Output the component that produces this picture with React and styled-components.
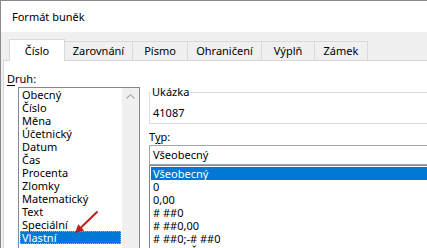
import React from "react";
import styled, { createGlobalStyle } from "styled-components";

const GlobalStyle = createGlobalStyle`
  html, body {
    margin: 0;
    padding: 0;
    overflow: hidden;
    background: #f0f0f0;
  }
  body {
    font-family: "Noto Sans", "Segoe UI", sans-serif;
    font-size: 11px;
    color: #000;
  }
`;

const Window = styled.div`
  width: 520px;
  height: 248px;
  border-left: 1px solid #8a8a8a;
  border-top: 1px solid #8a8a8a;
  background: #f0f0f0;
  display: flex;
  flex-direction: column;
  overflow: hidden;
`;

const TitleBar = styled.div`
  height: 31px;
  flex: none;
  background: #fff;
  padding-left: 11px;
  display: flex;
  align-items: center;
  line-height: 14px;
`;

const Body = styled.div`
  flex: 1;
  display: flex;
  flex-direction: column;
  padding: 7px 0 0 2px;
`;

const TabStrip = styled.div`
  display: flex;
  align-items: flex-end;
  height: 21px;
  padding-left: 6px;
  position: relative;
  z-index: 1;
`;

const Tab = styled.div`
  box-sizing: border-box;
  width: ${(p) => p.$w}px;
  height: ${(p) => (p.$active ? 22 : 19)}px;
  margin-bottom: ${(p) => (p.$active ? -1 : 0)}px;
  margin-left: -1px;
  &:first-child { margin-left: 0; }
  border: 1px solid #d9d9d9;
  border-bottom: none;
  background: ${(p) => (p.$active ? "#fff" : "#f0f0f0")};
  position: relative;
  z-index: ${(p) => (p.$active ? 2 : 1)};
  display: flex;
  align-items: center;
  justify-content: center;
  line-height: 14px;
`;

const Panel = styled.div`
  flex: 1;
  background: #fff;
  border-top: 1px solid #d9d9d9;
  border-left: 1px solid #d9d9d9;
  display: flex;
  align-items: flex-start;
`;

const LeftCol = styled.div`
  width: 145px;
  flex: none;
  padding-top: 11px;
  position: relative;
`;

const Label = styled.div`
  line-height: 14px;
  margin-left: ${(p) => p.$indent || 0}px;
  margin-top: ${(p) => p.$top || 0}px;
  u { text-decoration: underline; text-underline-offset: 2px; }
`;

const ListBox = styled.div`
  box-sizing: border-box;
  margin: 1px 0 0 14px;
  width: 122px;
  height: 200px;
  border: 1px solid #828790;
  display: flex;
`;

const Items = styled.div`
  flex: 1;
  padding-top: ${(p) => p.$pad || 0}px;
`;

const Item = styled.div`
  height: 13px;
  line-height: 13px;
  margin: 0 1px;
  padding-left: 2px;
  white-space: nowrap;
  background: ${(p) => (p.$selected ? "#0078d7" : "transparent")};
  color: ${(p) => (p.$selected ? "#fff" : "#000")};
  outline: ${(p) => (p.$focus ? "1px dotted #f0a23a" : "none")};
  outline-offset: -1px;
`;

const ScrollBar = styled.div`
  width: 17px;
  flex: none;
  background: #f0f0f0;
`;

const ScrollButton = styled.div`
  height: 17px;
  display: flex;
  align-items: center;
  justify-content: center;
`;

const Arrow = styled.svg`
  position: absolute;
  left: 66px;
  top: 144px;
  overflow: visible;
`;

const RightCol = styled.div`
  flex: 1;
  padding-top: 25px;
  min-width: 0;
`;

const Group = styled.fieldset`
  margin: 0;
  padding: 0 0 3px 1px;
  border: 1px solid #dcdcdc;
  min-width: 0;
`;

const Legend = styled.legend`
  padding: 0 1px;
  line-height: 12px;
`;

const Sample = styled.div`
  padding-top: 8px;
  margin-left: 2px;
  line-height: 14px;
`;

const Input = styled.div`
  box-sizing: border-box;
  margin-top: 1px;
  height: 20px;
  border: 1px solid #a6a6a6;
  padding-left: 3px;
  line-height: 18px;
`;

const TypeList = styled.div`
  box-sizing: border-box;
  height: 120px;
  border: 1px solid #828790;
  display: flex;
`;

const tabs = [
  ["Číslo", 56],
  ["Zarovnání", 69],
  ["Písmo", 56],
  ["Ohraničení", 75],
  ["Výplň", 54],
  ["Zámek", 54],
];

const kinds = [
  "Obecný", "Číslo", "Měna", "Účetnický", "Datum", "Čas", "Procenta",
  "Zlomky", "Matematický", "Text", "Speciální", "Vlastní",
];

const formats = [
  "Všeobecný", "0", "0,00", "# ##0", "# ##0,00", "# ##0;-# ##0",
  "# ##0;[Červené]-# ##0",
];

export default function App() {
  return (
    <>
      <GlobalStyle />
      <Window>
        <TitleBar>Formát buněk</TitleBar>
        <Body>
          <TabStrip>
            {tabs.map(([name, w], i) => (
              <Tab key={name} $w={w} $active={i === 0}>{name}</Tab>
            ))}
          </TabStrip>
          <Panel>
            <LeftCol>
              <Label $indent={3}><u>D</u>ruh:</Label>
              <ListBox>
                <Items>
                  {kinds.map((k) => (
                    <Item key={k} $selected={k === "Vlastní"} $focus={k === "Vlastní"}>{k}</Item>
                  ))}
                </Items>
                <ScrollBar>
                  <ScrollButton>
                    <svg width="9" height="5" viewBox="0 0 9 5">
                      <path d="M0.5 4.5 L4.5 0.8 L8.5 4.5" fill="none" stroke="#b0b0b0" strokeWidth="1.2" />
                    </svg>
                  </ScrollButton>
                </ScrollBar>
              </ListBox>
              <Arrow width="32" height="32" viewBox="0 0 32 32">
                <line x1="27" y1="7" x2="11.5" y2="22" stroke="#c0201a" strokeWidth="2" strokeLinecap="round" />
                <polygon points="5,28 14.2,25.6 8.2,19.2" fill="#c0201a" />
              </Arrow>
            </LeftCol>
            <RightCol>
              <Group>
                <Legend>Ukázka</Legend>
                <Sample>41087</Sample>
              </Group>
              <Label $top={6}>T<u>y</u>p:</Label>
              <Input>Všeobecný</Input>
              <TypeList>
                <Items $pad={1}>
                  {formats.map((f, i) => (
                    <Item key={f} $selected={i === 0}>{f}</Item>
                  ))}
                </Items>
              </TypeList>
            </RightCol>
          </Panel>
        </Body>
      </Window>
    </>
  );
}
